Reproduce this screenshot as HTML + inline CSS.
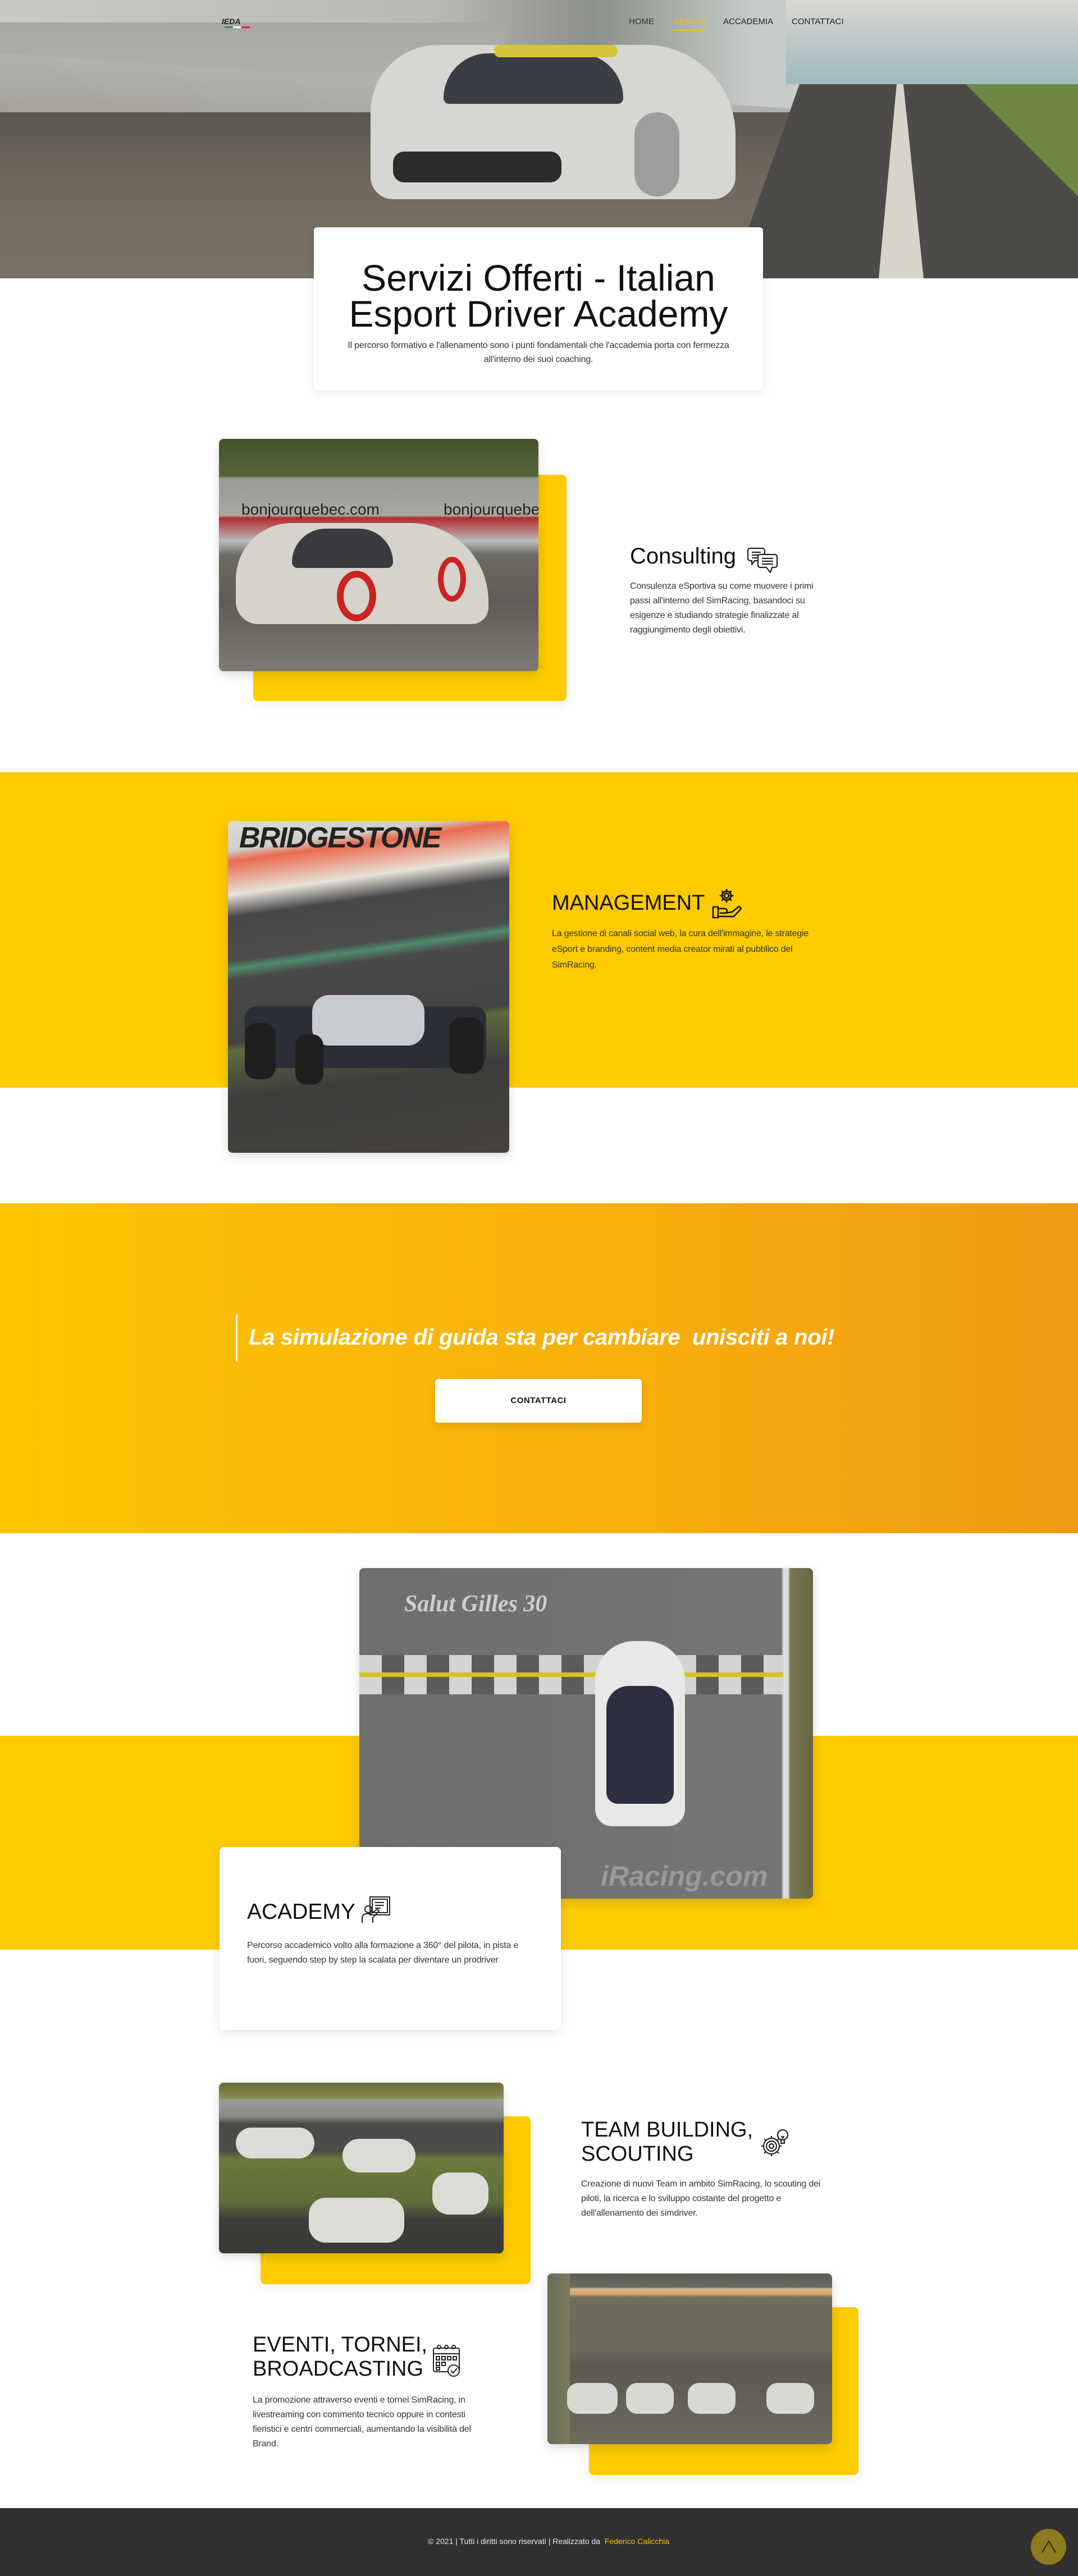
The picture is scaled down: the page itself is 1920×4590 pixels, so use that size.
<!DOCTYPE html>
<html><head><meta charset="utf-8">
<style>
*{margin:0;padding:0;box-sizing:border-box}
html,body{width:1920px;height:4590px;overflow:hidden;background:#fff}
body{position:relative;font-family:"Liberation Sans",sans-serif;color:#222}
.abs{position:absolute}
.ttl{font-family:"Liberation Sans",sans-serif;color:#111;letter-spacing:0.5px}
.txt{font-size:16px;line-height:26px;color:#333;letter-spacing:-0.2px}
.img{border-radius:8px;overflow:hidden;box-shadow:0 6px 18px rgba(0,0,0,.15)}
.yl{background:#fdcb00;border-radius:8px;box-shadow:0 6px 18px rgba(0,0,0,.08)}
</style></head><body>

<!-- HERO -->
<div class="abs" style="left:0;top:0;width:1920px;height:496px;overflow:hidden;background:#6a6258">
  <div class="abs" style="left:0;top:0;width:1920px;height:200px;background:linear-gradient(90deg,#c9c9c4 0%,#b9bab6 40%,#8c8f8a 55%,#c6ccc8 70%,#bcd0d2 100%)"></div>
  <div class="abs" style="left:1400px;top:0;width:520px;height:150px;background:linear-gradient(180deg,#d8d8d0,#9fb9c0)"></div>
  <div class="abs" style="left:0;top:40px;width:900px;height:180px;background:linear-gradient(180deg,#a7a8a5,#b8b8b4)"></div>
  <div class="abs" style="left:0;top:95px;width:1500px;height:120px;background:linear-gradient(180deg,#b3b2ad,#a29f98);transform:skewY(4deg);transform-origin:left"></div>
  <div class="abs" style="left:0;top:200px;width:1920px;height:296px;background:linear-gradient(180deg,#5c5850 0%,#716a5c 45%,#7b7263 100%)"></div>
  <div class="abs" style="left:1300px;top:150px;width:620px;height:350px;background:#4d4b47;clip-path:polygon(20% 0,100% 0,100% 100%,0 100%)"></div>
  <div class="abs" style="left:1565px;top:150px;width:80px;height:346px;background:#d9d4c8;clip-path:polygon(40% 0,55% 0,100% 100%,0 100%)"></div>
  <div class="abs" style="left:1720px;top:150px;width:200px;height:200px;background:#6f8846;clip-path:polygon(0 0,100% 0,100% 100%)"></div>
  <!-- car -->
  <div class="abs" style="left:660px;top:80px;width:650px;height:275px;background:#d6d6d2;border-radius:120px 160px 40px 40px"></div>
  <div class="abs" style="left:790px;top:95px;width:320px;height:90px;background:#3a3d44;border-radius:80px 80px 10px 10px"></div>
  <div class="abs" style="left:880px;top:80px;width:220px;height:22px;background:#d6c43e;border-radius:10px"></div>
  <div class="abs" style="left:700px;top:270px;width:300px;height:55px;background:#2b2b2b;border-radius:20px"></div>
  <div class="abs" style="left:1130px;top:200px;width:80px;height:150px;background:#9d9d9d;border-radius:40px"></div>
  <!-- logo -->
  <div class="abs" style="left:395px;top:30px;width:55px;height:14px;font:italic bold 14px 'Liberation Sans',sans-serif;color:#222">IEDA</div>
  <div class="abs" style="left:400px;top:47px;width:45px;height:3px;background:linear-gradient(90deg,#2a9a3a 33%,#fff 33% 66%,#d22 66%)"></div>
  <!-- nav -->
  <div class="abs" style="left:1120px;top:30px;font-size:15px;color:#333">HOME</div>
  <div class="abs" style="left:1200px;top:30px;font-size:15px;color:#f5c400">SERVIZI</div>
  <div class="abs" style="left:1199px;top:53px;width:58px;height:2px;background:#f5c400"></div>
  <div class="abs" style="left:1288px;top:30px;font-size:15px;color:#222">ACCADEMIA</div>
  <div class="abs" style="left:1410px;top:30px;font-size:15px;color:#222">CONTATTACI</div>
</div>

<!-- hero card -->
<div class="abs" style="left:559px;top:405px;width:800px;height:290px;background:#fff;border-radius:6px;box-shadow:0 4px 16px rgba(0,0,0,.1);text-align:center">
  <div class="ttl" style="margin-top:58px;font-size:66px;line-height:64px;letter-spacing:0">Servizi Offerti - Italian<br>Esport Driver Academy</div>
  <div class="txt" style="margin-top:12px;font-size:16px;line-height:25px;padding:0 38px">Il percorso formativo e l'allenamento sono i punti fondamentali che l'accademia porta con fermezza all'interno dei suoi coaching.</div>
</div>

<!-- CONSULTING -->
<div class="abs yl" style="left:451px;top:846px;width:558px;height:403px"></div>
<div class="abs img" style="left:390px;top:782px;width:569px;height:414px;background:linear-gradient(180deg,#44522c 0%,#56643a 16%,#9c9a96 17%,#a7a6a2 33%,#b62a2e 34%,#b8bcbd 44%,#6d6a63 50%,#5f5c57 70%,#7d7a73 100%)">
  <div class="abs" style="left:40px;top:110px;font-size:28px;color:#222">bonjourquebec.com</div>
  <div class="abs" style="left:400px;top:110px;font-size:28px;color:#222">bonjourquebec</div>
  <div class="abs" style="left:30px;top:150px;width:450px;height:180px;background:#d5d3cc;border-radius:100px 140px 30px 40px"></div>
  <div class="abs" style="left:130px;top:160px;width:180px;height:70px;background:#3b3b3f;border-radius:60px 60px 10px 10px"></div>
  <div class="abs" style="left:210px;top:235px;width:70px;height:90px;border:12px solid #c22;border-radius:50%"></div>
  <div class="abs" style="left:390px;top:210px;width:50px;height:80px;border:10px solid #c22;border-radius:50%"></div>
</div>
<div class="abs ttl" style="left:1122px;top:968px;font-size:40px;line-height:46px;letter-spacing:0">Consulting</div>
<svg class="abs" style="left:1330px;top:973px" width="56" height="50" viewBox="0 0 56 50" fill="none" stroke="#222" stroke-width="2.2" stroke-linejoin="round">
<path d="M6 4h22a4 4 0 0 1 4 4v14a4 4 0 0 1-4 4H14l-5 7v-7H6a4 4 0 0 1-4-4V8a4 4 0 0 1 4-4z"/>
<path d="M9 11h16M9 16h16M9 21h12"/>
<path d="M24 15h26a4 4 0 0 1 4 4v15a4 4 0 0 1-4 4h-5l-3 9-7-9H24a4 4 0 0 1-4-4V19a4 4 0 0 1 4-4z" fill="#fff"/>
<path d="M27 22h20M27 27h20M27 32h20"/>
</svg>
<div class="abs txt" style="left:1122px;top:1032px;width:350px">Consulenza eSportiva su come muovere i primi passi all'interno del SimRacing, basandoci su esigenze e studiando strategie finalizzate al raggiungimento degli obiettivi.</div>

<!-- MANAGEMENT -->
<div class="abs" style="left:0;top:1376px;width:1920px;height:562px;background:#fdcb00"></div>
<div class="abs img" style="left:406px;top:1463px;width:501px;height:591px;background:linear-gradient(172deg,#dcdcd6 0%,#cfcfca 8%,#ea6a4e 11%,#e8e2d8 20%,#48484a 26%,#4c4d4b 38%,#4f8b6c 40%,#4a4948 43%,#434341 60%,#5e6a3c 62%,#3e3d3b 75%,#45423d 100%)">
  <div class="abs" style="left:20px;top:0;font:italic bold 52px 'Liberation Sans',sans-serif;color:#222;letter-spacing:-2px">BRIDGESTONE</div>
  <div class="abs" style="left:30px;top:330px;width:430px;height:110px;background:#2b2e37;border-radius:20px"></div>
  <div class="abs" style="left:150px;top:310px;width:200px;height:90px;background:#c8cbd0;border-radius:30px"></div>
  <div class="abs" style="left:30px;top:360px;width:55px;height:100px;background:#1f1f1f;border-radius:20px"></div>
  <div class="abs" style="left:395px;top:350px;width:60px;height:100px;background:#1f1f1f;border-radius:20px"></div>
  <div class="abs" style="left:120px;top:380px;width:50px;height:90px;background:#1f1f1f;border-radius:20px"></div>
</div>
<div class="abs ttl" style="left:983px;top:1586px;font-size:38px;line-height:46px;letter-spacing:0">MANAGEMENT</div>
<svg class="abs" style="left:1266px;top:1582px" width="56" height="56" viewBox="0 0 56 56" fill="none" stroke="#111" stroke-width="2.6" stroke-linejoin="round" stroke-linecap="round">
<circle cx="28" cy="14" r="4"/>
<path d="M28 3v4M28 21v4M17 14h4M35 14h4M20 6l3 3M33 19l3 3M20 22l3-3M33 9l3-3"/>
<circle cx="28" cy="14" r="8"/>
<rect x="4" y="34" width="9" height="19"/>
<path d="M13 37h12a4 4 0 0 1 0 8h-8M25 45l13-2 11-9a3 3 0 0 1 4 4L41 51H13"/>
</svg>
<div class="abs txt" style="left:983px;top:1650px;width:490px;line-height:28px;color:#333">La gestione di canali social web, la cura dell'immagine, le strategie eSport e branding, content media creator mirati al pubblico del SimRacing.</div>

<!-- CTA -->
<div class="abs" style="left:0;top:2144px;width:1920px;height:588px;background:linear-gradient(90deg,#fdc600 0%,#f6ae0c 60%,#ef9a12 100%)"></div>
<div class="abs" style="left:420px;top:2342px;width:3px;height:84px;background:#fff"></div>
<div class="abs" style="left:443px;top:2361px;font:italic bold 40px 'Liberation Sans',sans-serif;color:#fff;letter-spacing:-0.3px;white-space:nowrap">La simulazione di guida sta per cambiare&nbsp; unisciti a noi!</div>
<div class="abs" style="left:775px;top:2457px;width:368px;height:78px;background:#fff;border-radius:6px;box-shadow:0 5px 14px rgba(0,0,0,.1);text-align:center;line-height:78px;font-size:15px;font-weight:bold;color:#111;letter-spacing:0.5px">CONTATTACI</div>

<!-- ACADEMY -->
<div class="abs" style="left:0;top:3093px;width:1920px;height:381px;background:#fdcb00"></div>
<div class="abs img" style="left:640px;top:2794px;width:808px;height:589px;background:linear-gradient(90deg,#6e6e6c 0%,#757573 93%,#ddd 93.5%,#ddd 94.5%,#77754f 95%,#686a45 100%)">
  <div class="abs" style="left:80px;top:40px;font:italic bold 42px 'Liberation Serif',serif;color:#cfcfcf">Salut Gilles 30</div>
  <div class="abs" style="left:0;top:155px;width:755px;height:70px;background:repeating-linear-gradient(90deg,#d4d4d2 0 40px,#5c5c5a 40px 80px)"></div>
  <div class="abs" style="left:0;top:186px;width:755px;height:8px;background:#d7c21d"></div>
  <div class="abs" style="left:420px;top:130px;width:160px;height:330px;background:#e8e8e6;border-radius:70px 70px 30px 30px"></div>
  <div class="abs" style="left:440px;top:210px;width:120px;height:210px;background:#2c3040;border-radius:40px 40px 20px 20px"></div>
  <div class="abs" style="left:430px;top:520px;font:italic bold 50px 'Liberation Sans',sans-serif;color:#9a9a9a">iRacing.com</div>
</div>
<div class="abs" style="left:391px;top:3291px;width:608px;height:326px;background:#fff;border-radius:8px;box-shadow:0 4px 18px rgba(0,0,0,.12)"></div>
<div class="abs ttl" style="left:440px;top:3384px;font-size:39px;line-height:46px;letter-spacing:0">ACADEMY</div>
<svg class="abs" style="left:643px;top:3378px" width="54" height="50" viewBox="0 0 54 50" fill="none" stroke="#222" stroke-width="2" stroke-linejoin="round">
<rect x="16" y="2" width="35" height="32"/><rect x="20" y="6" width="27" height="24"/>
<path d="M25 12h16M25 17h16M25 22h10"/>
<circle cx="13" cy="24" r="6"/>
<path d="M2 48V38a8 8 0 0 1 8-6h7l12-8 3 3-11 12v9"/>
</svg>
<div class="abs txt" style="left:440px;top:3454px;width:515px">Percorso accademico volto alla formazione a 360° del pilota, in pista e fuori, seguendo step by step la scalata per diventare un prodriver</div>

<!-- TEAM BUILDING -->
<div class="abs yl" style="left:464px;top:3771px;width:481px;height:299px"></div>
<div class="abs img" style="left:390px;top:3711px;width:507px;height:304px;background:linear-gradient(180deg,#6b6a3a 0%,#8a8d52 9%,#9d9c98 10%,#898883 20%,#4a4a48 24%,#4c4b48 40%,#6a7a3c 45%,#5f6e37 70%,#3d3c3a 80%,#3a3936 100%)">
  <div class="abs" style="left:30px;top:80px;width:140px;height:55px;background:#dcdcd6;border-radius:30px"></div>
  <div class="abs" style="left:220px;top:100px;width:130px;height:60px;background:#dcdcd6;border-radius:30px"></div>
  <div class="abs" style="left:380px;top:160px;width:100px;height:75px;background:#dcdcd6;border-radius:30px"></div>
  <div class="abs" style="left:160px;top:205px;width:170px;height:80px;background:#dcdcd6;border-radius:30px"></div>
</div>
<div class="abs ttl" style="left:1035px;top:3774px;font-size:38px;line-height:43px;letter-spacing:0">TEAM BUILDING,<br>SCOUTING</div>
<svg class="abs" style="left:1352px;top:3790px" width="56" height="56" viewBox="0 0 56 56" fill="none" stroke="#222" stroke-width="2.2" stroke-linejoin="round">
<circle cx="22" cy="34" r="9"/><circle cx="22" cy="34" r="4"/>
<path d="M22 16v5M22 47v5M4 34h5M35 34h5M9 21l4 4M31 43l4 4M9 47l4-4M31 25l4-4"/>
<circle cx="22" cy="34" r="14"/>
<circle cx="42" cy="14" r="9"/><path d="M39 23v6h6v-6M40 16l2 4 2-4"/>
</svg>
<div class="abs txt" style="left:1035px;top:3879px;width:430px">Creazione di nuovi Team in ambito SimRacing, lo scouting dei piloti, la ricerca e lo sviluppo costante del progetto e dell'allenamento dei simdriver.</div>

<!-- EVENTI -->
<div class="abs yl" style="left:1049px;top:4111px;width:480px;height:299px"></div>
<div class="abs img" style="left:975px;top:4051px;width:507px;height:304px;background:linear-gradient(180deg,#5a5a50 0%,#6d6c64 8%,#d8b98a 9%,#d9a56b 12%,#6f6b5d 14%,#6c685a 45%,#5c5950 55%,#6e6a5c 100%)">
  <div class="abs" style="left:0;top:0;width:40px;height:304px;background:linear-gradient(90deg,#6a6c55,#7b7a61)"></div>
  <div class="abs" style="left:35px;top:195px;width:90px;height:55px;background:#d9d9d4;border-radius:20px"></div>
  <div class="abs" style="left:140px;top:195px;width:85px;height:55px;background:#d9d9d4;border-radius:20px"></div>
  <div class="abs" style="left:250px;top:195px;width:85px;height:55px;background:#d9d9d4;border-radius:20px"></div>
  <div class="abs" style="left:390px;top:195px;width:85px;height:55px;background:#d9d9d4;border-radius:20px"></div>
</div>
<div class="abs ttl" style="left:450px;top:4157px;font-size:38px;line-height:43px;letter-spacing:0">EVENTI, TORNEI,<br>BROADCASTING</div>
<svg class="abs" style="left:770px;top:4176px" width="52" height="64" viewBox="0 0 52 64" fill="none" stroke="#222" stroke-width="2">
<rect x="2" y="8" width="46" height="42" rx="3"/><path d="M2 18h46"/>
<circle cx="12" cy="6" r="3"/><circle cx="25" cy="6" r="3"/><circle cx="38" cy="6" r="3"/>
<rect x="7" y="23" width="6" height="6"/><rect x="17" y="23" width="6" height="6"/><rect x="27" y="23" width="6" height="6"/><rect x="37" y="23" width="6" height="6"/>
<rect x="7" y="33" width="6" height="6"/><rect x="17" y="33" width="6" height="6"/>
<rect x="7" y="42" width="6" height="5"/>
<circle cx="38" cy="48" r="10" fill="#fff"/><path d="M33 48l4 4 7-8"/>
</svg>
<div class="abs txt" style="left:450px;top:4264px;width:420px">La promozione attraverso eventi e tornei SimRacing, in livestreaming con commento tecnico oppure in contesti fieristici e centri commerciali, aumentando la visibilità del Brand.</div>

<!-- FOOTER -->
<div class="abs" style="left:0;top:4469px;width:1920px;height:121px;background:#303030"></div>
<div class="abs" style="left:762px;top:4520px;font-size:14px;color:#e8e8e8;white-space:nowrap">© 2021 | Tutti i diritti sono riservati | Realizzato da &nbsp;<span style="color:#f5c400">Federico Calicchia</span></div>
<div class="abs" style="left:1836px;top:4506px;width:63px;height:64px;border-radius:50%;background:#8f7a1d"></div>
<svg class="abs" style="left:1852px;top:4524px" width="32" height="26" viewBox="0 0 32 26" fill="none" stroke="#222" stroke-width="2"><path d="M4 24L16 4l12 20"/></svg>
</body></html>
